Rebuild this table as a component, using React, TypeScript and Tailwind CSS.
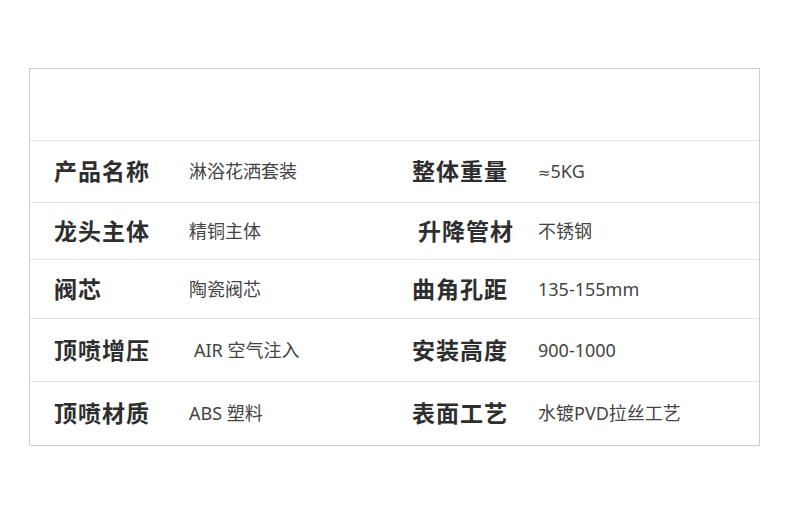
import React from 'react';

type Row = { h: string; a: string; av: React.ReactNode; avIndent?: boolean; b: string; bIndent?: boolean; bv: React.ReactNode };

const rows: Row[] = [
    {
        h: 'h-[62px]',
        a: '产品名称',
        av: '淋浴花洒套装',
        b: '整体重量',
        bv: (
            <>
                <span className="font-['DejaVu_Sans'] text-[15px]">≈</span>5KG
            </>
        ),
    },
    { h: 'h-[57px]', a: '龙头主体', av: '精铜主体', b: '升降管材', bIndent: true, bv: '不锈钢' },
    { h: 'h-[59px]', a: '阀芯', av: '陶瓷阀芯', b: '曲角孔距', bv: '135-155mm' },
    { h: 'h-[63px]', a: '顶喷增压', av: 'AIR 空气注入', avIndent: true, b: '安装高度', bv: '900-1000' },
    { h: 'h-[63px]', a: '顶喷材质', av: 'ABS 塑料', b: '表面工艺', bv: '水镀PVD拉丝工艺' },
];

const font = "font-['Noto_Sans','Noto_Sans_CJK_SC',sans-serif]";

const App: React.FC = () => {
    return (
        <div className={`w-[790px] h-[510px] bg-white pt-[68px] pl-[29px] ${font}`}>
            <div className="w-[731px] border border-[#cfcfcf]">
                {/* empty header row */}
                <div className="h-[72px] border-b border-[#e2e2e2]" />
                {rows.map((r, i) => (
                    <div
                        key={i}
                        className={`${r.h} grid grid-cols-[135px_223px_126px_1fr] items-center pl-6 ${i < rows.length - 1 ? 'border-b border-[#e2e2e2]' : ''}`}
                    >
                        <div className="text-[23px] font-bold text-[#2e2e2e] tracking-[1px]">{r.a}</div>
                        <div className={`text-[18px] text-[#444] ${r.avIndent ? 'pl-[5px]' : ''}`}>{r.av}</div>
                        <div className={`text-[23px] font-bold text-[#2e2e2e] tracking-[1px] ${r.bIndent ? 'pl-[6px]' : ''}`}>{r.b}</div>
                        <div className="text-[18px] text-[#444]">{r.bv}</div>
                    </div>
                ))}
            </div>
        </div>
    );
};

export default App;
